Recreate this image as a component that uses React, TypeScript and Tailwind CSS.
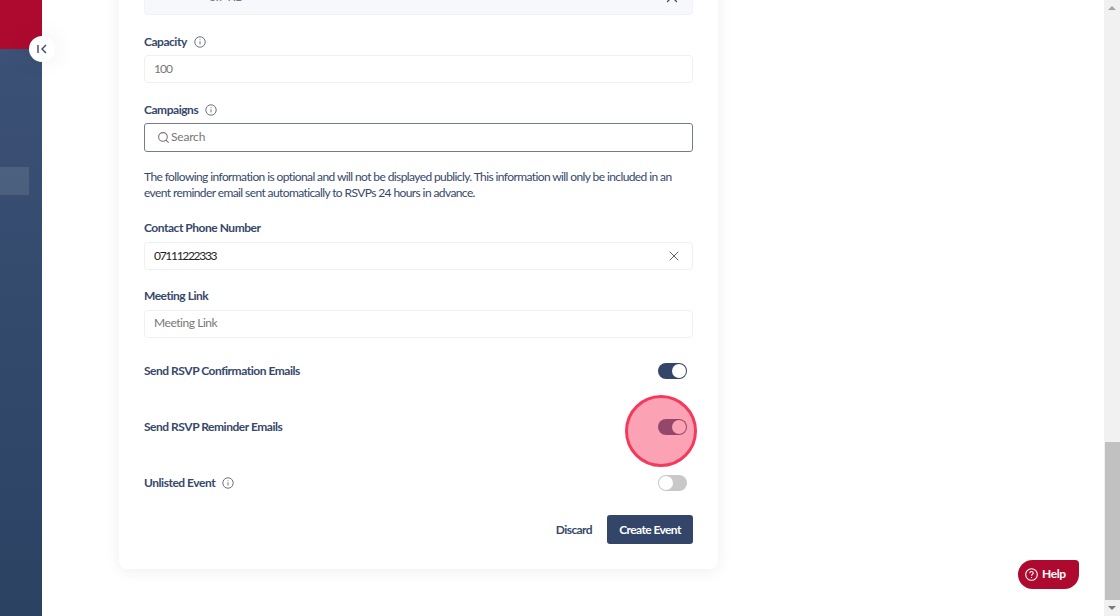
import { Search, X } from 'lucide-react';
import React from 'react';

const Info = () => (
  <svg width="12" height="12" viewBox="0 0 12 12" fill="none" stroke="#6b7280" strokeWidth="1" className="shrink-0">
    <circle cx="6" cy="6" r="5.2" />
    <path d="M6 5.4v3M6 3.4v.8" />
  </svg>
);

const Label = ({ children, info }: { children: React.ReactNode; info?: boolean }) => (
  <div className="flex h-5 items-center gap-[7px] pb-0.5 text-[12px] font-bold tracking-[-0.47px] text-[#36486b]">
    <span>{children}</span>
    {info && <Info />}
  </div>
);

const Toggle = ({ on }: { on: boolean }) => (
  <div className={`flex h-4 w-[29px] items-center rounded-full px-px ${on ? 'justify-end bg-[#33466a]' : 'justify-start bg-[#c8c8c8]'}`}>
    <div className="h-[14px] w-[14px] rounded-full bg-white" />
  </div>
);

const ToggleRow = ({ label, on, info }: { label: string; on: boolean; info?: boolean }) => (
  <div className="flex h-5 items-center justify-between pr-[6px]">
    <div className="pt-px"><Label info={info}>{label}</Label></div>
    <Toggle on={on} />
  </div>
);

export default function App() {
  return (
    <div className="relative flex h-[616px] w-[1120px] overflow-hidden bg-white font-['Lato',sans-serif]">
      {/* Barra lateral */}
      <aside className="flex w-[42px] shrink-0 flex-col bg-gradient-to-b from-[#3d5277] to-[#2b4263]">
        <div className="h-[49px] bg-[#ae0a2f]" />
        <div className="mt-[118px] h-7 w-[29px] bg-white/10" />
      </aside>
      <button className="absolute left-[29px] top-[36px] flex h-[26px] w-[26px] items-center justify-center rounded-full bg-white text-[#36486b] shadow-[0_0_24px_rgba(0,0,0,0.08)]">
        <svg width="12" height="10" viewBox="0 0 12 10" fill="none" stroke="currentColor" strokeWidth="1.4">
          <path d="M2 1v8M10 1 6 5l4 4" />
        </svg>
      </button>

      {/* Conteúdo */}
      <main className="min-w-0 flex-1 pl-[77px]">
        <div className="relative -mt-[30px] h-[599px] w-[599px] rounded-lg bg-white pl-[25px] pr-[25px] shadow-[0_2px_16px_rgba(0,0,0,0.07)]">
          <div className="flex h-[45px] items-end justify-between rounded-b border border-[#f1f2f5] bg-[#f7f8fb] pb-[8px] pl-[64px] pr-[11px] text-[12px] tracking-[-0.3px] text-[#777]">
            <span>6.7 KB</span>
            <X className="h-[18px] w-[18px] text-[#36486b]" strokeWidth={1.6} />
          </div>

          <div className="mt-[18px]"><Label info>Capacity</Label></div>
          <div className="mt-[2px] flex h-[28px] items-center rounded border border-[#f0f0f2] px-[9px] text-[12px] tracking-[-0.9px] text-[#777]">100</div>

          <div className="mt-[18px]"><Label info>Campaigns</Label></div>
          <div className="mt-[2px] flex h-[29px] items-center gap-[1px] rounded-[3px] border border-[#737b8c] pb-0.5 pl-3 text-[12px] tracking-[-0.2px] text-[#777]">
            <Search className="mt-0.5 h-[13px] w-[13px]" />
            <span>Search</span>
          </div>

          <p className="mt-[17px] text-[12px] leading-4 tracking-[-0.6px] text-[#36486b]">
            The following information is optional and will not be displayed publicly. This information will only be included in an event reminder email sent automatically to RSVPs 24 hours in advance.
          </p>

          <div className="mt-[18px]"><Label>Contact Phone Number</Label></div>
          <div className="mt-[3px] flex h-[28px] items-center justify-between rounded border border-[#f0f0f2] pl-[9px] pr-[10px] text-[12px] tracking-[-1.3px] text-[#222]">
            <span>07111222333</span>
            <X className="h-4 w-4 text-[#555]" strokeWidth={1.4} />
          </div>

          <div className="mt-[17px]"><Label>Meeting Link</Label></div>
          <div className="mt-[3px] flex h-[28px] items-center rounded border border-[#f0f0f2] px-[9px] pb-0.5 text-[12px] tracking-[-0.45px] text-[#777]">Meeting Link</div>

          <div className="mt-[23px] flex flex-col gap-9">
            <ToggleRow label="Send RSVP Confirmation Emails" on />
            <ToggleRow label="Send RSVP Reminder Emails" on />
            <ToggleRow label="Unlisted Event" on={false} info />
          </div>

          <div className="mt-[22px] flex items-center justify-end gap-[15px]">
            <button className="text-[12px] font-bold tracking-[-0.6px] text-[#36486b]">Discard</button>
            <button className="h-[29px] w-[86px] rounded-[3px] bg-[#33466a] text-[12px] font-bold tracking-[-0.6px] text-white">Create Event</button>
          </div>

          {/* Destaque do passo */}
          <div className="absolute left-[506px] top-[425px] h-[72px] w-[72px] rounded-full border-[3px] border-[#f43a5c] bg-[#f8476a]/50" />
        </div>
      </main>

      {/* Botão de ajuda */}
      <button className="absolute left-[1018px] top-[560px] flex h-[29px] w-[61px] items-center gap-[4px] rounded-[15px] rounded-tr-[4px] bg-[#ae0a2f] pb-0.5 pl-[7px] text-[12px] font-bold tracking-[-0.4px] text-white">
        <svg width="13" height="13" viewBox="0 0 13 13" fill="none" stroke="currentColor" strokeWidth="1.1" className="mt-0.5">
          <circle cx="6.5" cy="6.5" r="5.8" />
          <path d="M4.8 5.2c0-2.2 3.4-2.2 3.4-.1 0 1.4-1.7 1.4-1.7 2.6M6.5 9v.9" />
        </svg>
        Help
      </button>

      {/* Barra de rolagem */}
      <div className="flex w-4 shrink-0 flex-col bg-[#f1f1f1]">
        <div className="flex h-4 items-center justify-center">
          <div className="h-0 w-0 border-x-4 border-b-4 border-x-transparent border-b-[#a3a3a3]" />
        </div>
        <div className="mt-[426px] ml-[1px] h-[158px] w-[15px] bg-[#c1c1c1]" />
        <div className="flex h-4 items-center justify-center">
          <div className="h-0 w-0 border-x-4 border-t-4 border-x-transparent border-t-[#7a7a7a]" />
        </div>
      </div>
    </div>
  );
}
